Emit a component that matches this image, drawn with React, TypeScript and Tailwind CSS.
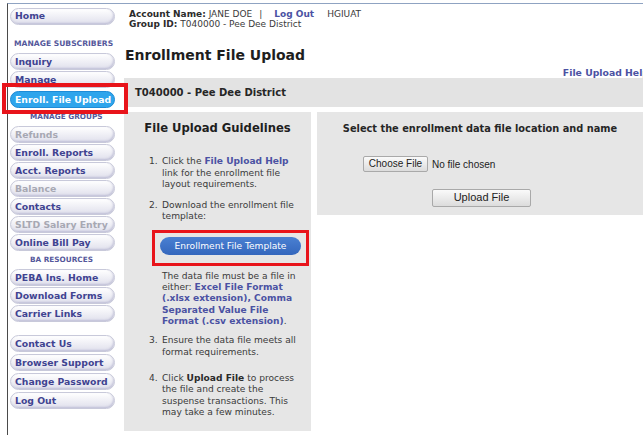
import React from "react";
import clsx from "clsx";

type NavItem =
  | { kind: "link"; label: string; active?: boolean; disabled?: boolean }
  | { kind: "label"; label: string; indent?: boolean };

const topNav: NavItem[] = [
  { kind: "label", label: "MANAGE SUBSCRIBERS" },
  { kind: "link", label: "Inquiry" },
  { kind: "link", label: "Manage" },
  { kind: "link", label: "Enroll. File Upload", active: true },
  { kind: "label", label: "MANAGE GROUPS", indent: true },
  { kind: "link", label: "Refunds", disabled: true },
  { kind: "link", label: "Enroll. Reports" },
  { kind: "link", label: "Acct. Reports" },
  { kind: "link", label: "Balance", disabled: true },
  { kind: "link", label: "Contacts" },
  { kind: "link", label: "SLTD Salary Entry", disabled: true },
  { kind: "link", label: "Online Bill Pay" },
  { kind: "label", label: "BA RESOURCES", indent: true },
  { kind: "link", label: "PEBA Ins. Home" },
  { kind: "link", label: "Download Forms" },
  { kind: "link", label: "Carrier Links" },
];

const bottomNav = ["Contact Us", "Browser Support", "Change Password", "Log Out"];

const NavButton: React.FC<{ label: string; active?: boolean; disabled?: boolean; className?: string }> = ({
  label,
  active,
  disabled,
  className,
}) => (
  <a
    href="#"
    className={clsx(
      "ml-[2px] flex h-[17px] w-[105px] shrink-0 items-center whitespace-nowrap rounded-[9px] border pl-[4px] text-[9.3px] font-bold",
      active
        ? "border-[#1d8bd6] bg-[#2ea5ec] text-white"
        : "border-[#c8c9da] bg-linear-to-b from-white to-[#e0e0ec] shadow-[inset_-1px_-1px_2px_rgba(130,130,175,0.35)]",
      !active && (disabled ? "text-[#a7a8b3]" : "text-[#3f4391]"),
      className
    )}
  >
    {label}
  </a>
);

const Sidebar: React.FC = () => (
  <aside className="flex w-[112px] shrink-0 flex-col">
    <NavButton label="Home" className="mt-[3.5px]" />
    <div className="mt-[11.5px] flex flex-col gap-[1px]">
      {topNav.map((item) =>
        item.kind === "label" ? (
          <div
            key={item.label}
            className={clsx(
              "flex h-[16px] items-center whitespace-nowrap font-bold text-[#55589b]",
              item.indent ? "pl-[22px] text-[7.3px]" : "pl-[6px] text-[7.6px]"
            )}
          >
            {item.label}
          </div>
        ) : (
          <NavButton
            key={item.label}
            label={item.label}
            active={item.active}
            disabled={item.disabled}
            className={item.active ? "mt-[2px]" : undefined}
          />
        )
      )}
    </div>
    <div className="mt-[13px] flex flex-col gap-[2px]">
      {bottomNav.map((label) => (
        <NavButton key={label} label={label} />
      ))}
    </div>
  </aside>
);

const Guidelines: React.FC = () => (
  <section className="w-[187px] shrink-0 bg-[#e6e6e6] pb-[13px] pt-[9.5px] text-[9.1px] leading-[11.3px] text-[#3a3a3a]">
    <h2 className="text-center text-[11.6px] font-bold leading-[14px] text-[#1e1e1e]">File Upload Guidelines</h2>
    <ol className="mt-[21px] pl-[25px]">
      <li className="flex">
        <span className="w-[13px] shrink-0">1.</span>
        <div className="w-[138px]">
          Click the <b className="text-[#4b52a3]">File Upload Help</b> link for the enrollment file layout requirements.
        </div>
      </li>
      <li className="mt-[9.4px] flex">
        <span className="w-[13px] shrink-0">2.</span>
        <div className="w-[140px]">
          Download the enrollment file template:
          <div className="relative mt-[15px] -ml-[2px]">
            <a
              href="#"
              className="flex h-[18px] w-[141px] items-center justify-center rounded-full bg-linear-to-b from-[#4a80d2] to-[#3467bd] text-[9.1px] text-white"
            >
              Enrollment File Template
            </a>
            <div className="pointer-events-none absolute -bottom-[11px] -left-[8px] -right-[7px] -top-[7px] border-[3px] border-[#e8141b]" />
          </div>
          <p className="mt-[15.5px] w-[138px]">
            The data file must be a file in either:{" "}
            <b className="text-[#4b52a3]">Excel File Format (.xlsx extension), Comma Separated Value File Format (.csv extension)</b>.
          </p>
        </div>
      </li>
      <li className="mt-[8px] flex">
        <span className="w-[13px] shrink-0">3.</span>
        <div className="w-[138px]">Ensure the data file meets all format requirements.</div>
      </li>
      <li className="mt-[15.3px] flex">
        <span className="w-[13px] shrink-0">4.</span>
        <div className="w-[138px]">
          Click <b className="text-[#2a2a2a]">Upload File</b> to process the file and create the suspense transactions. This may
          take a few minutes.
        </div>
      </li>
    </ol>
  </section>
);

const UploadPanel: React.FC = () => (
  <section className="flex-1 self-start bg-[#e6e6e6] pb-[8px] pt-[11px]">
    <h3 className="text-center text-[9.8px] font-bold leading-[12px] text-[#262626]">
      Select the enrollment data file location and name
    </h3>
    <div className="mt-[21px] flex items-center pl-[46px] font-['Liberation_Sans',Arial,sans-serif] text-[10px] text-[#222]">
      <button className="h-[16.5px] w-[65px] rounded-[2px] border border-[#a9a9a9] bg-linear-to-b from-[#fafafa] to-[#dcdcdc] leading-none">
        Choose File
      </button>
      <span className="ml-[4px]">No file chosen</span>
    </div>
    <div className="mt-[16.5px] flex justify-center pr-[-2px]">
      <button className="ml-[3px] h-[18px] w-[99px] rounded-[2px] border border-[#a9a9a9] bg-linear-to-b from-[#fafafa] to-[#dcdcdc] font-['Liberation_Sans',Arial,sans-serif] text-[11px] leading-none text-[#222]">
        Upload File
      </button>
    </div>
  </section>
);

export default function App() {
  return (
    <div className="relative h-[435px] w-[643px] overflow-hidden bg-white pl-[7px] pt-[3px] font-['DejaVu_Sans',Verdana,sans-serif]">
      <div className="flex h-[440px] border-l border-t border-l-[#4a4a4a] border-t-[#8fa3c2]">
        <Sidebar />
        <main className="min-w-0 flex-1">
          <div className="pl-[9px] pt-[4.75px] text-[9px] leading-[10.5px] text-[#3a3a3a]">
            <div className="whitespace-nowrap">
              <b className="text-[#2b2b2b]">Account Name:</b> JANE DOE
              <span className="ml-[7px]">|</span>
              <a href="#" className="ml-[12px] font-bold text-[#4b52a3]">
                Log Out
              </a>
              <span className="ml-[13px]">HGIUAT</span>
            </div>
            <div className="whitespace-nowrap">
              <b className="text-[#2b2b2b]">Group ID:</b> T040000 - Pee Dee District
            </div>
          </div>
          <h1 className="mt-[16.75px] pl-[5px] text-[14px] font-bold leading-[17px] text-[#1e1e1e]">Enrollment File Upload</h1>
          <div className="-mr-[6px] mt-[3.7px] text-right text-[9.3px] font-bold leading-[11px] text-[#4b52a3]">
            <a href="#">File Upload Help</a>
          </div>
          <div className="ml-[4px] flex h-[29px] items-center bg-[#e3e3e3] pl-[11px] text-[10px] font-bold text-[#262626]">
            T040000 - Pee Dee District
          </div>
          <div className="mt-[4.7px] flex gap-[6px] pl-[4px]">
            <Guidelines />
            <UploadPanel />
          </div>
        </main>
      </div>
      {/* highlight around the current menu entry */}
      <div className="pointer-events-none absolute left-[2px] top-[83px] h-[31px] w-[126px] border-[4px] border-[#e8141b]" />
    </div>
  );
}
